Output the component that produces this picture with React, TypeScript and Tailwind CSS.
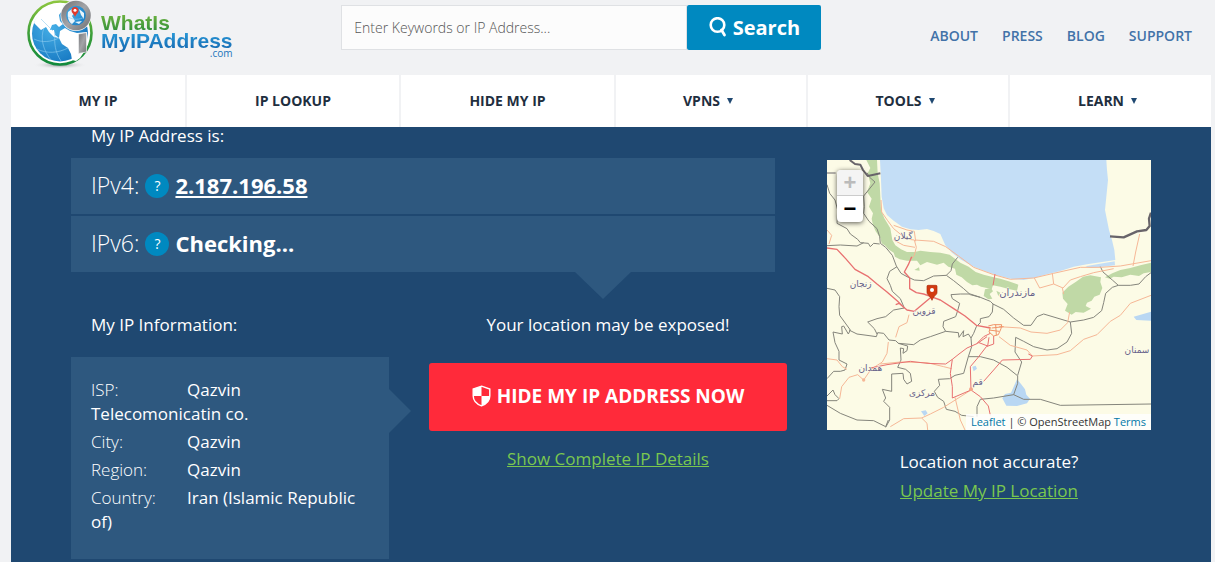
import clsx from 'clsx';

const topLinks = ['About', 'Press', 'Blog', 'Support'];

const navItems = [
  { label: 'My IP', menu: false },
  { label: 'IP Lookup', menu: false },
  { label: 'Hide My IP', menu: false },
  { label: 'VPNs', menu: true },
  { label: 'Tools', menu: true },
  { label: 'Learn', menu: true },
];

const ipInfo = [
  { label: 'ISP:', value: 'Qazvin Telecomonicatin co.' },
  { label: 'City:', value: 'Qazvin' },
  { label: 'Region:', value: 'Qazvin' },
  { label: 'Country:', value: 'Iran (Islamic Republic of)' },
];

function GlobeLogo() {
  return (
    <svg width="68" height="70" viewBox="0 0 68 70" aria-hidden="true">
      <defs>
        <linearGradient id="ring" x1="0" y1="0" x2="0" y2="1">
          <stop offset="0" stopColor="#8cc63f" />
          <stop offset="0.5" stopColor="#3fa03a" />
          <stop offset="1" stopColor="#128a3c" />
        </linearGradient>
        <radialGradient id="ocean" cx="0.35" cy="0.4" r="0.75">
          <stop offset="0" stopColor="#45aee6" />
          <stop offset="1" stopColor="#1273be" />
        </radialGradient>
        <linearGradient id="steel" x1="0" y1="0" x2="1" y2="1">
          <stop offset="0" stopColor="#77787b" />
          <stop offset="0.5" stopColor="#a3a4a7" />
          <stop offset="1" stopColor="#77787b" />
        </linearGradient>
        <radialGradient id="shade">
          <stop offset="0" stopColor="#8b8d90" />
          <stop offset="1" stopColor="#f1f2f4" stopOpacity="0" />
        </radialGradient>
      </defs>
      <ellipse cx="33" cy="65" rx="27" ry="4" fill="url(#shade)" />
      <circle cx="33" cy="33" r="31.5" fill="#fff" stroke="url(#ring)" strokeWidth="2.6" />
      <circle cx="33" cy="33.500" r="28" fill="url(#ocean)" />
      <path
        d="M7 23C10 14 17 7 27 5l8-1 3 3-3 4-3 4 1 6 3 3-4 3-3-3-4 1-2 5 4 0 1 5 4 3-5-1-5-5-3-5-5 3z"
        fill="#fff"
      />
      <path
        d="M33 31l5-3 5 3 7 2 10-1 1 8-2 9-6 9-4 3-4-1-1-6-3-6-6-4-3-6z"
        fill="#fff"
      />
      <path
        d="M7 39c8 4 17 3 25-1M10 49c10 5 21 4 31-1M17 28c-4 10-1 22 7 32M28 33c-1 10 0 19 6 28M14 19l12 12"
        fill="none"
        stroke="#8fcdf0"
        strokeWidth="0.6"
      />
      <path d="M51.500 34l8-1.500v19.500l-8 1.500z" fill="url(#steel)" stroke="#f1f2f4" strokeWidth="0.7" />
      <circle cx="49" cy="15.500" r="15.500" fill="#f1f2f4" />
      <circle cx="49" cy="15.500" r="12.300" fill="url(#ocean)" stroke="url(#steel)" strokeWidth="5" />
      <path d="M41 12l4-3 3 3-3 4 3 5-3 3c-3-2-5-6-4-12zM52 9l5 4 0 6-3-4zM48 22l7-1-3 3z" fill="#e9f5fb" />
      <path d="M41 17c5 3 12 3 16 0" fill="none" stroke="#8fcdf0" strokeWidth="0.6" />
      <path d="M48 17c-1-3-3.500-4-3.500-6.500a3.500 3.500 0 0 1 7 0c0 2.500-2.500 3.500-3.500 6.500z" fill="#e03a2c" />
      <circle cx="48" cy="10.300" r="1.500" fill="#fff" />
    </svg>
  );
}

function SearchIcon() {
  return (
    <svg width="18" height="21" viewBox="0 0 18 21" fill="none" stroke="#fff" aria-hidden="true">
      <ellipse cx="8.500" cy="8" rx="6.800" ry="6.800" strokeWidth="2.600" />
      <path d="M12.500 13l3 5" strokeWidth="2.800" strokeLinecap="round" />
    </svg>
  );
}

function ShieldIcon() {
  return (
    <svg width="19" height="22" viewBox="0 0 19 22" aria-hidden="true">
      <path
        d="M9.500 1.200L17.800 4v7c0 4.600-3.300 8-8.300 9.800C4.500 19 1.200 15.600 1.200 11V4z"
        fill="none"
        stroke="#fff"
        strokeWidth="1.400"
      />
      <path d="M9.500 1.200V11H1.200V4zM9.500 11h8.300c0 4.600-3.300 8-8.300 9.800z" fill="#fff" />
    </svg>
  );
}

function LocationMap() {
  return (
    <svg
      viewBox="0 0 972 810"
      className="block w-full bg-[#fcfbe6]"
      role="img"
      aria-label="Map of your location"
    >
      {/* sea and lakes */}
      <path
        d="M159 0L162 60 164 110 170 145 180 165 200 182 225 200 250 208 275 210 300 207 320 213 340 222 348 240 355 256 375 278 400 298 440 320 480 336 510 346 550 356 590 360 620 354 660 343 700 333 740 320 780 313 830 305 865 300 862 270 855 240 846 210 840 180 834 150 838 110 843 60 840 30 838 0z"
        fill="#c4def6"
      />
      <path d="M775 319L863 304 864 316 820 321 790 324z" fill="#c4def6" />
      <path
        d="M570 658L582 672 594 688 598 704 609 716 600 730 570 738 538 737 526 715 534 702 552 698 562 676z"
        fill="#b9d7f3"
      />
      <path d="M920 470L972 455 972 482 928 480zM436 620L446 617 450 626 440 634zM282 754L296 751 302 760 292 768z" fill="#b9d7f3" />
      {/* forests */}
      <path
        d="M118 0L150 0 152 40 158 70 160 110 162 150 172 175 190 205 196 240 205 256 222 268 240 276 262 276 280 272 310 276 340 278 368 284 384 296 400 308 425 320 446 336 470 344 500 352 520 356 545 364 574 374 570 392 548 388 520 380 498 376 494 388 480 384 462 380 450 374 436 376 420 366 404 352 388 344 384 326 364 320 350 308 330 314 300 306 280 316 270 302 240 302 218 298 204 290 200 278 184 268 176 258 164 250 160 234 146 214 138 196 134 176 138 160 126 140 134 116 120 96 130 70 122 40 130 24z"
        fill="#c0d9a6"
      />
      <path d="M262 330L276 322 278 332zM474 388L492 384 498 394 488 402 496 416 484 418 470 408zM508 392L520 398 514 408z" fill="#c0d9a6" />
      <path
        d="M706 398L724 380 746 366 768 350 790 346 822 352 820 366 826 384 818 404 802 410 794 422 780 428 776 438 792 446 770 458 746 456 734 464 714 452 722 432 708 416z"
        fill="#c0d9a6"
      />
      <path d="M834 352L856 340 880 330 910 324 940 316 972 308 972 336 950 340 936 348 910 344 884 352 860 350 848 356z" fill="#c0d9a6" />
      {/* province borders */}
      <g fill="none" stroke="#85857c" strokeWidth="3" strokeLinejoin="round">
        <path d="M0 74L8 100 24 120 32 150 30 190 60 206 70 222 92 238 100 248 124 250 130 260 140 250 158 252" />
        <path d="M0 257L40 255 90 258 110 248M120 38L128 52 144 66 110 108 112 140 110 160 126 184 150 206 158 230 160 250 176 262 196 286 208 318 222 340 240 350 262 360 290 362 320 348 358 346 372 332 376 312 392 292" />
        <path d="M210 320L188 334 180 356 190 376 196 394 220 416 232 444 200 450 176 470 150 476 122 486 142 506 150 522" />
        <path d="M358 346L380 362 410 386 430 404 460 412 490 424 500 434M372 404L400 402 430 402 460 412M372 404L376 416 398 430 392 452 386 470 350 484 348 500 356 514" />
        <path d="M0 385L24 390 38 410 36 440 38 466 70 510 64 522 50 498 44 500 46 522 18 516 24 548 36 574 36 600 60 612 54 630 40 634 20 634 0 656" />
        <path d="M66 510L90 522 120 526 148 530 152 518 170 520 186 540 206 542 214 550 260 554 280 540 310 530 356 514 394 518 396 532 410 512 408 530 424 522 432 534 440 520" />
        <path d="M214 550L242 558 240 572 228 580 230 566 220 564 222 600 212 622 236 628 250 640 254 664 240 672 230 658 228 640 194 642 194 694 166 688 176 714 170 724 188 742 188 780 176 802" />
        <path d="M432 534L434 560 424 590 410 640 384 646 368 656 334 658 338 676 322 694 332 712 350 724 358 748 384 754 404 766 440 770M424 590L460 590 500 600 540 622 570 646" />
        <path d="M440 520L448 500 460 488 460 476 486 470 496 456 498 432 530 448 560 474 590 496 612 496 630 470 650 462 690 474 730 486 770 480 800 472 824 452 830 428 836 400 856 382 874 376" />
        <path d="M820 320L828 336 856 360 874 376 910 376 936 372 956 350 972 338" />
        <path d="M730 486L734 520 720 546 690 566 660 570 620 560 590 544 566 532 564 576 584 606 572 646 572 670 560 704 500 714 460 718 450 740 450 770M560 704L590 718 640 718 700 736 972 732" />
        <path d="M0 708L18 690 24 704 36 716 30 722 0 722M0 736L40 760 90 780 140 782 176 800 184 780" />
      </g>
      {/* minor roads */}
      <g fill="none" stroke="#f6b796" strokeWidth="3" strokeLinejoin="round">
        <path d="M162 120L164 156 182 182 200 206 222 224 244 238 262 240 268 262 262 286 254 296M200 196L240 210 262 214 266 244M200 240L230 256 264 262M264 240L320 244 356 260 400 292 440 322 500 344 550 358 620 354 680 340 760 322 820 322 880 318 972 302" />
        <path d="M622 354L638 384 680 372 676 340M680 372L708 384 730 360 760 350 800 338 860 326M918 318L926 276 938 222M706 384L710 402M0 596L30 600 46 620 60 628M110 660L92 644 66 652 44 680 38 716M110 660L132 628 166 606 180 580 184 546" />
        <path d="M246 464L240 488 216 500 206 532M190 800L230 776 284 774 310 762 350 742 432 690M284 774L300 790 302 810M384 712L400 780 414 810M160 612L220 606 300 608 350 620 374 626M0 210L14 226 6 252" />
        <path d="M516 500L580 504 612 516 660 520 700 510 722 488 728 456M516 530L550 556 600 570 616 588 690 584 730 572 770 538 810 524 850 484 880 466 910 430 972 406" />
      </g>
      {/* main roads */}
      <g fill="none" stroke="#e87070" strokeWidth="3" strokeLinejoin="round">
        <path
          d="M0 264L30 268 56 296 84 328 124 350 150 372 180 396 212 424 232 444M206 434L216 430 240 450 262 454 312 412M254 290L244 314 232 336 248 354 248 386 268 398 290 402 312 410 340 420 380 446 414 468 448 496 490 504"
          strokeWidth="4"
        />
        <path d="M130 624L180 614 250 604 300 610 356 612 376 598 396 582 420 564 452 550 480 530M376 598L370 640 376 680 376 714 432 690M432 690L430 620 452 594 478 560 500 552 500 528M470 664L500 630 526 600 610 598 616 588 604 582M432 690L460 710 484 738 490 766M450 550L470 530 490 520M456 548L482 558 486 532M504 342L498 376" />
      </g>
      <path
        d="M484 498L500 494 524 494 522 506 514 524 500 528 486 516 490 502M494 504L530 500M506 494L508 526M486 510L516 514"
        fill="none"
        stroke="#f09468"
        strokeWidth="3"
      />
      <circle cx="432" cy="688" r="6" fill="#f6a58a" />
      <circle cx="110" cy="660" r="5" fill="#f6b796" />
      {/* country borders */}
      <g fill="none" stroke="#68646a" strokeWidth="7" strokeLinejoin="round">
        <path d="M68 0L84 12 100 14 108 30 122 48 140 44 160 40" strokeWidth="6" />
        <path d="M0 39L26 39" strokeWidth="3" />
        <path d="M849 229L890 232 930 214 958 210 968 198 966 176 972 158" />
      </g>
      <g
        fill="#66618a"
        fontSize="27"
        textAnchor="middle"
        stroke="#fcfbe6"
        strokeWidth="3"
        paintOrder="stroke"
        className="font-['DejaVu_Sans',sans-serif]"
      >
        <text x="229" y="236">گیلان</text>
        <text x="101" y="380">زنجان</text>
        <text x="291" y="461">قزوین</text>
        <text x="571" y="409" fontSize="30">مازندران</text>
        <text x="130" y="634">همدان</text>
        <text x="285" y="709">مرکزی</text>
        <text x="452" y="674">قم</text>
        <text x="930" y="579">سمنان</text>
      </g>
      {/* current position */}
      <path
        d="M303 376h24a3 3 0 0 1 3 3v18c0 8-8 8-15 24c-7-16-15-16-15-24v-18a3 3 0 0 1 3-3z"
        fill="#d23a10"
        stroke="#a92b0c"
        strokeWidth="2"
      />
      <circle cx="315" cy="390" r="6" fill="#fff" />
    </svg>
  );
}

function IpRow({ label, children }: { label: string; children: React.ReactNode }) {
  return (
    <div className="flex h-14 items-center bg-[#2e587f] px-5 pb-[2px] text-[22px]">
      <span className="text-[23px] font-light">{label}</span>
      <button
        type="button"
        aria-label={`What is ${label}`}
        className="mx-[6px] mt-[2px] size-6 rounded-full bg-[#0089c0] text-sm font-medium"
      >
        ?
      </button>
      {children}
    </div>
  );
}

export default function App() {
  return (
    <div className="flex min-h-screen flex-col bg-[#f1f2f4] pl-[11px] pr-1 font-['Open_Sans',sans-serif]">
      <header className="flex h-[75px] items-start justify-between pl-4 pr-[19px]">
        <a href="#" className="flex font-['Liberation_Sans',sans-serif] text-[21px] font-bold leading-[18px]">
          <GlobeLogo />
          <span className="ml-[6px] flex flex-col pt-[14px]">
            <span className="bg-linear-to-b from-[#6cb33f] to-[#2f8f3a] bg-clip-text text-transparent">WhatIs</span>
            <span className="bg-linear-to-b from-[#2a9ad8] to-[#1565ae] bg-clip-text pb-[2px] text-transparent">
              MyIPAddress
            </span>
            <span className="-mt-1 self-end font-['Open_Sans',sans-serif] text-[10px] font-medium leading-[10px] text-[#1b75bb]">
              .com
            </span>
          </span>
        </a>

        <form className="mt-[5px] flex h-[45px] w-[480px]">
          <input
            type="text"
            aria-label="Search"
            placeholder="Enter Keywords or IP Address..."
            className="min-w-0 flex-1 border border-[#dfe1e4] bg-[#fcfcfc] px-3 text-sm font-light placeholder:text-[#555]"
          />
          <button
            type="submit"
            className="flex w-[134px] items-center justify-center gap-[6px] rounded-[2px] bg-[#0089c0] text-xl font-bold text-white"
          >
            <SearchIcon />
            Search
          </button>
        </form>

        <div className="mt-[26px] flex gap-6 text-sm font-semibold uppercase text-[#4272a8]">
          {topLinks.map((link) => (
            <a key={link} href="#">
              {link}
            </a>
          ))}
        </div>
      </header>

      <nav className="grid h-[52px] grid-cols-[176fr_214fr_215fr_192fr_202fr_201fr] bg-white">
        {navItems.map((item, i) => (
          <a
            key={item.label}
            href="#"
            className={clsx(
              'flex items-center justify-center gap-[7px] text-sm font-bold uppercase text-[#1f2f3f]',
              i < navItems.length - 1 && 'border-r-2 border-[#f1f2f4]',
              item.menu && 'pr-[6px]'
            )}
          >
            {item.label}
            {item.menu && (
              <svg width="6" height="6" viewBox="0 0 6 6" aria-hidden="true">
                <path d="M0 0h6L3 6z" fill="#1f4871" />
              </svg>
            )}
          </a>
        ))}
      </nav>

      <main className="flex flex-1 items-start gap-10 bg-[#1f4871] px-[60px] text-[17px] text-white">
        <div className="flex-1">
          <h2 className="pl-5 leading-[18px]">My IP Address is:</h2>
          <div className="mr-3 mt-[13px] flex flex-col gap-[2px]">
            <IpRow label="IPv4:">
              <a href="#" className="font-bold underline">
                2.187.196.58
              </a>
            </IpRow>
            <IpRow label="IPv6:">
              <span className="font-bold">Checking...</span>
            </IpRow>
          </div>
          <div className="ml-[504px] h-[27px] w-14 bg-[#2e587f] [clip-path:polygon(0_0,100%_0,50%_100%)]" />

          <div className="mt-[14px] grid grid-cols-[318fr_358fr] gap-10 leading-6">
            <section>
              <h2 className="mb-5 pl-5">My IP Information:</h2>
              <div className="relative bg-[#2e587f] px-5 pb-[25px] pt-[21px]">
                <ul className="flex flex-col gap-1">
                  {ipInfo.map((row) => (
                    <li key={row.label}>
                      <span className="inline-block w-24 font-light">{row.label}</span>
                      {row.value}
                    </li>
                  ))}
                </ul>
                <div className="absolute left-full top-8 h-11 w-[22px] bg-[#2e587f] [clip-path:polygon(0_0,100%_50%,0_100%)]" />
              </div>
            </section>

            <section className="flex flex-col items-center">
              <h2 className="mb-[26px]">Your location may be exposed!</h2>
              <button
                type="button"
                className="flex h-[68px] w-full items-center justify-center gap-[6px] rounded-[3px] bg-[#ff2a3a] pb-[2px] text-[19px] font-bold"
              >
                <ShieldIcon />
                HIDE MY IP ADDRESS NOW
              </button>
              <a href="#" className="mt-4 text-[#7ac74f] underline">
                Show Complete IP Details
              </a>
            </section>
          </div>
        </div>

        <aside className="mt-[33px] flex w-[324px] flex-col items-center">
          <div className="relative w-full">
            <LocationMap />
            <div className="absolute left-[10px] top-[10px] flex w-[26px] flex-col overflow-hidden rounded-[4px] bg-white font-['Liberation_Sans',sans-serif] text-[22px] font-bold leading-[26px] text-black shadow-[0_1px_5px_rgba(0,0,0,0.65)]">
              <button type="button" aria-label="Zoom in" className="h-[26px] border-b border-[#ccc] bg-[#f4f4f4] text-[#bbb]">
                +
              </button>
              <button type="button" aria-label="Zoom out" className="h-[26px]">
                −
              </button>
            </div>
            <div className="absolute bottom-0 right-0 bg-white/80 px-[5px] text-[11px] leading-4 text-[#333]">
              <a href="#" className="text-[#0078a8]">
                Leaflet
              </a>{' '}
              | © OpenStreetMap{' '}
              <a href="#" className="text-[#0078a8]">
                Terms
              </a>
            </div>
          </div>
          <p className="mt-5 leading-6">Location not accurate?</p>
          <a href="#" className="mt-[5px] leading-6 text-[#7ac74f] underline">
            Update My IP Location
          </a>
        </aside>
      </main>
    </div>
  );
}
